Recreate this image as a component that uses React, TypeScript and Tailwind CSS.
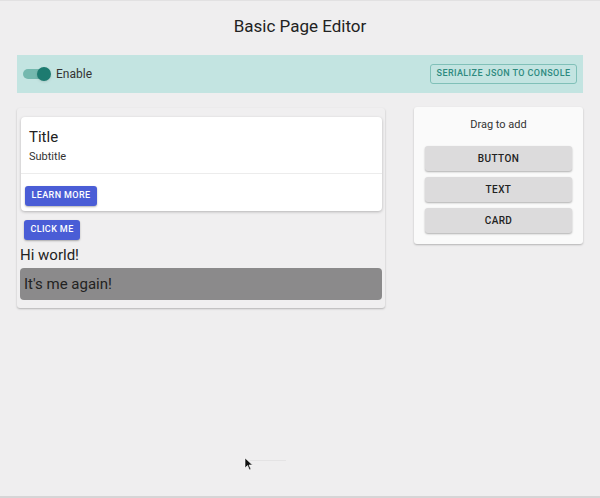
export default function App() {
  return (
    <div
      className="relative h-[498px] w-[600px] overflow-hidden bg-[#efeeef] border-t border-[#e2e1e2] border-b-2 border-b-[#d6d5d6]"
      style={{ fontFamily: "Roboto, 'Liberation Sans', sans-serif" }}
    >
      <div className="flex h-[52px] items-center justify-center text-[17px] text-[#222]">
        Basic Page Editor
      </div>

      <div className="px-[17px]">
        {/* toolbar */}
        <div className="mt-[2px] flex h-[38px] items-center justify-between bg-[#c3e4e1] pl-[6px] pr-[6px]">
          <div className="flex items-center">
            <div className="relative h-[14px] w-[28px]">
              <div className="absolute left-0 top-[2px] h-[10px] w-[26px] rounded-full bg-[#74b8ae]" />
              <div className="absolute right-0 top-0 h-[14px] w-[14px] rounded-full bg-[#1d7b70] shadow" />
            </div>
            <span className="ml-[5px] text-[12px] text-[#333]">Enable</span>
          </div>
          <button className="flex h-[20px] w-[147px] items-center justify-center rounded-[3px] border border-[#80c0b8] text-[9px] font-medium tracking-[0.4px] text-[#2e8a7f]">
            SERIALIZE JSON TO CONSOLE
          </button>
        </div>

        <div className="mt-[15px] flex items-start justify-between">
          {/* canvas */}
          <div className="flex w-[368px] flex-col items-start rounded-[3px] bg-[#f0eff0] pb-[8px] pl-[3px] pr-[3px] pt-[9px] shadow-[0_1px_2px_rgba(0,0,0,0.25)]">
            <div className="ml-[1px] w-[361px] rounded-[4px] bg-white shadow-[0_1px_3px_rgba(0,0,0,0.25)]">
              <div className="px-[8px] pb-[8px] pt-[10px]">
                <div className="text-[15px] leading-[20px] text-[#222]">Title</div>
                <div className="mt-[2px] text-[11px] leading-[16px] text-[#333]">Subtitle</div>
              </div>
              <div className="flex border-t border-[#ececec] px-[4px] pb-[5px] pt-[12px]">
                <button className="flex h-[20px] w-[72px] items-center justify-center rounded-[3px] bg-[#4a5dd6] text-[9px] font-medium tracking-[0.4px] text-white shadow-[0_1px_2px_rgba(0,0,0,0.3)]">
                  LEARN MORE
                </button>
              </div>
            </div>
            <button className="ml-[4px] mt-[9px] flex h-[20px] w-[56px] items-center justify-center rounded-[3px] bg-[#4a5dd6] text-[9px] font-medium tracking-[0.4px] text-white shadow-[0_1px_2px_rgba(0,0,0,0.3)]">
              CLICK ME
            </button>
            <div className="mt-[5px] text-[15px] leading-[20px] text-[#222]">Hi world!</div>
            <div className="mt-[3px] flex h-[32px] w-full items-center rounded-[4px] bg-[#8b8a8b] pl-[4px] text-[15px] text-[#222]">
              It's me again!
            </div>
          </div>

          {/* palette */}
          <div className="-mt-[1px] w-[169px] rounded-[3px] bg-[#fafafa] px-[11px] pb-[11px] pt-[10px] shadow-[0_1px_2px_rgba(0,0,0,0.25)]">
            <div className="text-center text-[11px] leading-[16px] text-[#333]">Drag to add</div>
            <div className="mt-[13px] flex flex-col gap-[6px]">
              {["BUTTON", "TEXT", "CARD"].map((t) => (
                <button
                  key={t}
                  className="flex h-[25px] w-full items-center justify-center rounded-[3px] bg-[#dcdbdc] text-[10px] font-medium tracking-[0.4px] text-[#222] shadow-[0_1px_2px_rgba(0,0,0,0.3)]"
                >
                  {t}
                </button>
              ))}
            </div>
          </div>
        </div>
      </div>

      {/* cursor */}
      <div className="absolute left-[250px] top-[459px] h-px w-[36px] bg-[#e4e3e4]" />
      <svg className="absolute left-[244px] top-[456px]" width="10" height="14" viewBox="0 0 10 14">
        <path d="M1 1 L1 11 L3.5 8.5 L5.5 13 L7 12.3 L5 8 L8.5 8 Z" fill="#111" stroke="#fff" strokeWidth="0.6" />
      </svg>
    </div>
  );
}
